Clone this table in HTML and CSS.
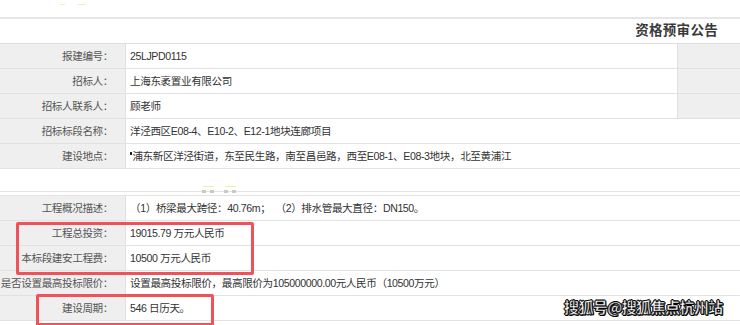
FILE: index.html
```html
<!DOCTYPE html>
<html lang="zh-CN">
<head>
<meta charset="utf-8">
<title>资格预审公告</title>
<link rel="stylesheet" href="styles.css">
</head>
<body>
<div class="page">
  <div class="top">
    <span class="spark s1"></span><span class="spark s2"></span>
  </div>
  <div class="title-row">资格预审公告</div>

  <div class="row"><div class="label"><span>报建编号：</span></div><div class="value">25LJPD0115</div><div class="extra"></div></div>
  <div class="row"><div class="label"><span>招标人：</span></div><div class="value">上海东袤置业有限公司</div><div class="extra"></div></div>
  <div class="row"><div class="label"><span>招标人联系人：</span></div><div class="value">顾老师</div><div class="extra"></div></div>
  <div class="row"><div class="label"><span>招标标段名称：</span></div><div class="value">洋泾西区E08-4、E10-2、E12-1地块连廊项目</div></div>
  <div class="row"><div class="label"><span>建设地点：</span></div><div class="value"><span class="caret"></span>浦东新区洋泾街道，东至民生路，南至昌邑路，西至E08-1、E08-3地块，北至黄浦江</div></div>

  <div class="gap">
    <div class="loader">
      <span class="dot-group"><i class="glow"></i><i class="d"></i><i class="d"></i></span>
      <span class="dot-group"><i class="glow"></i><i class="d"></i><i class="d"></i></span>
    </div>
  </div>
  <div class="band"></div>

  <div class="row"><div class="label"><span>工程概况描述：</span></div><div class="value">（1）桥梁最大跨径：40.76m；&nbsp;&nbsp;（2）排水管最大直径：DN150。</div></div>
  <div class="row"><div class="label"><span>工程总投资：</span></div><div class="value">19015.79 万元人民币</div></div>
  <div class="row"><div class="label"><span>本标段建安工程费：</span></div><div class="value">10500 万元人民币</div></div>
  <div class="row"><div class="label"><span>是否设置最高投标限价：</span></div><div class="value">设置最高投标限价，最高限价为105000000.00元人民币（10500万元）</div></div>
  <div class="row"><div class="label"><span>建设周期：</span></div><div class="value">546 日历天。</div></div>

  <div class="mark mark-a"></div>
  <div class="mark mark-b"></div>
  <div class="watermark">搜狐号@搜狐焦点杭州站</div>
</div>
</body>
</html>
```

FILE: styles.css
```css
html, body {
  margin: 0;
  padding: 0;
  background: #ffffff;
}

.page {
  position: relative;
  width: 740px;
  height: 325px;
  overflow: hidden;
  font-family: "Liberation Sans", "Noto Sans CJK SC", sans-serif;
  font-size: 10.6px;
  letter-spacing: -0.4px;
  color: #333;
}

.top {
  height: 17px;
  position: relative;
}

.spark {
  position: absolute;
  top: 4px;
  height: 1px;
  background: #f3f0a8;
}
.s1 { left: 60px; width: 5px; }
.s2 { left: 78px; width: 8px; }

.title-row {
  height: 24px;
  border-top: 2px solid #e6e6e6;
  border-bottom: 1px solid #dedede;
  text-align: right;
  padding-right: 22px;
  line-height: 24px;
  font-size: 13.5px;
  font-weight: bold;
  color: #3a3a3a;
  letter-spacing: 0.3px;
}

.row {
  display: flex;
  height: 24px;
  border-bottom: 1.5px solid #e2e2e2;
  line-height: 24px;
}

.label {
  width: 113px;
  flex: none;
  display: flex;
  justify-content: flex-end;
  background: #efefef;
  border-right: 1px solid #e0e0e0;
  padding-right: 12px;
  color: #555;
  white-space: nowrap;
  overflow: hidden;
}

.label span {
  flex: none;
}

.value {
  flex: 1;
  padding-left: 4px;
  white-space: nowrap;
  overflow: hidden;
  position: relative;
}

.extra {
  width: 62px;
  flex: none;
  background: #efefef;
  border-left: 1px solid #e0e0e0;
}

.caret {
  display: inline-block;
  width: 2px;
  height: 3px;
  background: #222;
  vertical-align: 5px;
  margin-right: 0.4px;
}

.gap {
  height: 22px;
  border-bottom: 1.5px solid #e4e4e4;
  position: relative;
}

.loader {
  position: absolute;
  left: 202px;
  top: 15px;
  display: flex;
  gap: 10px;
}

.dot-group {
  position: relative;
  display: flex;
  gap: 4px;
  padding-top: 6px;
}

.dot-group .glow {
  position: absolute;
  left: 1px;
  top: 2px;
  width: 11px;
  height: 1px;
  background: #f0eca0;
}

.dot-group .d {
  display: block;
  width: 4px;
  height: 3px;
  background: #c9c9c9;
}

.band {
  height: 3px;
  border-bottom: 1.5px solid #e4e4e4;
}

.mark {
  position: absolute;
  border: 3px solid #ef5259;
  border-radius: 2px;
}

.mark-a {
  left: 16px;
  top: 222px;
  width: 232px;
  height: 47px;
}

.mark-b {
  left: 36px;
  top: 294px;
  width: 172px;
  height: 26px;
}

.watermark {
  position: absolute;
  left: 564px;
  top: 297px;
  font-family: "Noto Sans CJK SC", sans-serif;
  font-size: 15px;
  font-weight: bold;
  color: #ffffff;
  letter-spacing: -0.6px;
  line-height: 20px;
  -webkit-text-stroke: 0.5px #111;
  text-shadow: 1px 1px 0 #000, -1px 0 0 #000, 0 -1px 0 #000, 1px 0 0 #000, 0 1px 0 #000;
}
```
